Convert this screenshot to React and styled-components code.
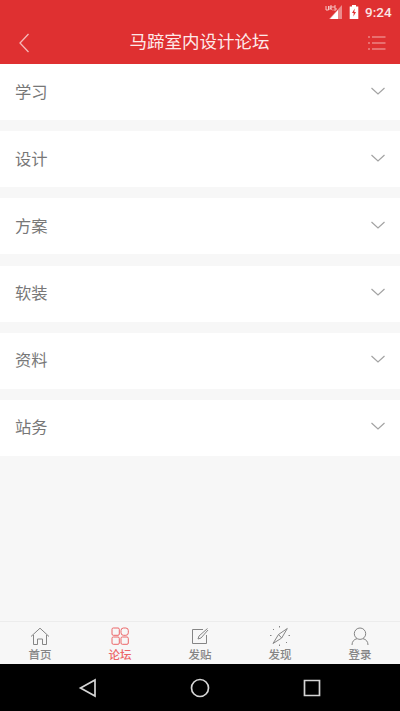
import React, { useState } from 'react';
import styled, { createGlobalStyle } from 'styled-components';

const GlobalStyle = createGlobalStyle`
  * {
    box-sizing: border-box;
  }
  body {
    margin: 0;
    font-family: Roboto, 'Noto Sans CJK SC', sans-serif;
    background: #f7f7f7;
  }
  svg {
    display: block;
    fill: none;
  }
`;

const EntireContainer = styled.div`
  display: flex;
  flex-direction: column;
  width: 400px;
  height: 711px;
  overflow: hidden;
  background: #f7f7f7;
`;

const TopContainer = styled.header`
  height: 64px;
  background: #df3031;
  color: #fff;
`;

const StatusBar = styled.div`
  display: flex;
  justify-content: flex-end;
  align-items: center;
  height: 24px;
  padding: 0 7px 0 0;
  > span {
    width: 28px;
    margin-left: 6px;
    font-size: 13.5px;
    font-weight: 500;
    line-height: 24px;
    color: #fbe4e4;
    white-space: nowrap;
  }
`;

const TitleBar = styled.div`
  display: flex;
  justify-content: space-between;
  align-items: center;
  height: 37px;
  padding: 0 14px 0 16px;
  > h1 {
    margin: 0;
    font-size: 17.5px;
    font-weight: 400;
    line-height: 37px;
    color: #fde9e9;
  }
`;

const IconButton = styled.button`
  display: flex;
  padding: 0;
  border: 0;
  background: none;
  cursor: pointer;
`;

const BoardList = styled.ul`
  flex: 1;
  display: flex;
  flex-direction: column;
  gap: 11.2px;
  margin: 0;
  padding: 0;
  list-style: none;
`;

const BoardContainer = styled.li`
  display: flex;
  justify-content: space-between;
  align-items: center;
  height: 56px;
  padding: 0 14px 3px 15px;
  background: #fff;
  color: #777;
  font-size: 16.3px;
  cursor: pointer;
`;

const TabBar = styled.nav`
  display: grid;
  grid-template-columns: repeat(5, 1fr);
  height: 43px;
  border-top: 1px solid #ececec;
  background: #f7f7f7;
`;

const TabButton = styled.button`
  display: flex;
  flex-direction: column;
  align-items: center;
  gap: 1px;
  padding: 4px 0 0;
  border: 0;
  background: none;
  color: ${({ $active }) => ($active ? '#ec6668' : '#858585')};
  font-family: inherit;
  font-size: 11.5px;
  font-weight: 500;
  line-height: 15px;
  cursor: pointer;
`;

const SystemBar = styled.footer`
  display: flex;
  justify-content: center;
  gap: 92px;
  align-items: center;
  height: 47px;
  background: #000;
`;

function SignalIcon() {
  return (
    <svg width="18" height="16" viewBox="0 0 18 16">
      <path d="M17 1v14H4z" fill="#eb8a8b" />
      <path d="M13 6v9H5z" fill="#fff" />
      <path
        d="M1 2v4h2.500V2M5 6V2h2v2H5l2.500 2M11 2H9v2h2v2H8.500"
        stroke="#f6c4c4"
      />
    </svg>
  );
}

function BatteryIcon() {
  return (
    <svg width="10" height="16" viewBox="0 0 10 16" style={{ marginLeft: 6 }}>
      <path d="M3 1h4v1.500h2.300V15H.700V2.500H3z" fill="#fff" />
      <path d="M5.700 4.500 3 9h1.700l-.300 3.500L7 8H5.300z" fill="#df3031" />
    </svg>
  );
}

const tabs = [
  {
    name: '首页',
    icon: <path d="m1 10.500 9-8.300 9 8.300M3.500 9v9.500h4V13h5v5.500h4V9" />,
  },
  {
    name: '论坛',
    icon: (
      <>
        <rect x="2" y="2" width="7.300" height="7.300" rx="1.300" />
        <rect x="11" y="2" width="7.300" height="7.300" rx="2.500" />
        <rect x="2" y="11" width="7.300" height="7.300" rx="1.300" />
        <rect x="11" y="11" width="7.300" height="7.300" rx="1.300" />
      </>
    ),
  },
  {
    name: '发贴',
    icon: <path d="M13 3.500H2.500v14h14V9M8 13l1-3 8.500-7.500M8 13l3-1 7-8" />,
  },
  {
    name: '发现',
    icon: (
      <>
        <path d="M17.300 2.500 11.700 12 3 17.500 8.500 8.500zM8.500 8.500l3.200 3.500" />
        <path d="M9.500 0v1.500M0 9.500h1.500M18.500 9.500H20M9.500 18.500V20M3 3l1 1M16 16l1 1" />
      </>
    ),
  },
  {
    name: '登录',
    icon: (
      <>
        <circle cx="10" cy="7.700" r="5.700" />
        <path d="M2 19c0-3.500 2-5.700 5-6.300M13 12.700c3 .600 5 2.800 5 6.300" />
      </>
    ),
  },
];

const boards = ['学习', '设计', '方案', '软装', '资料', '站务'];

function Board({ name }) {
  return (
    <BoardContainer>
      {name}
      <svg width="16" height="10" viewBox="0 0 16 10" stroke="#a3a3a3">
        <path d="m1.500 2 6.500 6 6.500-6" strokeWidth="1.200" />
      </svg>
    </BoardContainer>
  );
}

function App() {
  const [current, setCurrent] = useState('论坛');

  return (
    <EntireContainer>
      <GlobalStyle />
      <TopContainer>
        <StatusBar>
          <SignalIcon />
          <BatteryIcon />
          <span>9:24</span>
        </StatusBar>
        <TitleBar>
          <IconButton aria-label="返回">
            <svg width="16" height="20" viewBox="0 0 16 20" stroke="#f5b9b9">
              <path d="M12.500 1 4 10l8.500 9" strokeWidth="1.300" />
            </svg>
          </IconButton>
          <h1>马蹄室内设计论坛</h1>
          <IconButton aria-label="菜单">
            <svg width="19" height="16" viewBox="0 0 19 16" stroke="#f3adad">
              <path
                d="M1 2h2M5 2h13.500M1 8h2M5 8h13.500M1 14h2M5 14h13.500"
                strokeWidth="1.200"
              />
            </svg>
          </IconButton>
        </TitleBar>
      </TopContainer>
      <BoardList>
        {boards.map((name) => (
          <Board key={name} name={name} />
        ))}
      </BoardList>
      <TabBar>
        {tabs.map(({ name, icon }) => (
          <TabButton
            key={name}
            $active={name === current}
            onClick={() => setCurrent(name)}
          >
            <svg width="20" height="21" viewBox="0 0 20 21" stroke="currentColor">
              {icon}
            </svg>
            {name}
          </TabButton>
        ))}
      </TabBar>
      <SystemBar>
        <svg width="20" height="20" viewBox="0 0 20 20" stroke="#d5d5d5">
          <path d="M17 2v16L2.500 10z" strokeWidth="1.700" />
        </svg>
        <svg width="20" height="20" viewBox="0 0 20 20" stroke="#d5d5d5">
          <circle cx="10" cy="10" r="8.500" strokeWidth="1.700" />
        </svg>
        <svg width="20" height="20" viewBox="0 0 20 20" stroke="#d5d5d5">
          <path d="M2.500 2.500h15v15h-15z" strokeWidth="1.700" />
        </svg>
      </SystemBar>
    </EntireContainer>
  );
}

export default App;
